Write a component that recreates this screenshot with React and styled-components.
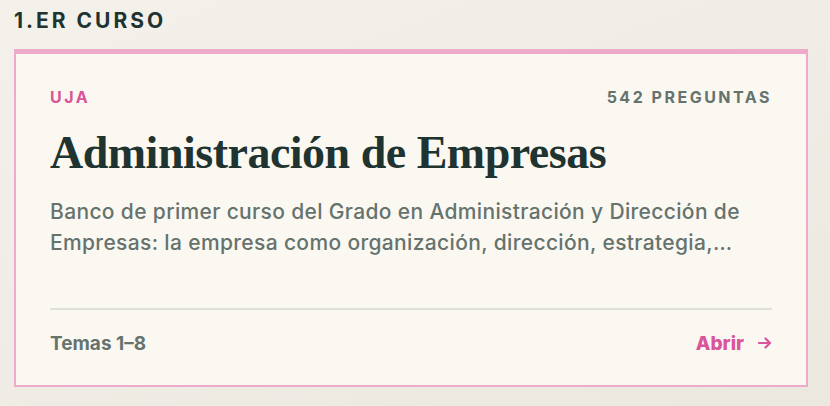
import React from "react";
import styled, { createGlobalStyle } from "styled-components";

const GlobalStyle = createGlobalStyle`
  html, body {
    margin: 0;
    padding: 0;
  }
  body {
    width: 830px;
    height: 406px;
    overflow: hidden;
    background: linear-gradient(160deg, #f3f1ea 0%, #ebe8e0 100%);
    font-family: Inter, "Noto Sans", sans-serif;
  }
`;

const Section = styled.section`
  padding: 9px 22px 0 14px;
`;

const SectionTitle = styled.h2`
  margin: 0 0 16px;
  font-size: 21px;
  line-height: 24px;
  font-weight: 700;
  letter-spacing: 3px;
  color: #1f3330;
`;

const Card = styled.article`
  background: #fbf8f2;
  border: 2px solid #eeaacb;
  border-top-width: 5px;
  padding: 33px 34px 30px;
  display: flex;
  flex-direction: column;
`;

const MetaRow = styled.div`
  display: flex;
  justify-content: space-between;
  align-items: center;
  height: 20px;
`;

const Meta = styled.span`
  font-size: 16px;
  line-height: 20px;
  font-weight: 700;
  letter-spacing: 2.5px;
  text-transform: uppercase;
  color: ${(p) => (p.$accent ? "#d9549a" : "#66736d")};
`;

const Title = styled.h3`
  margin: 19px 0 16px;
  font-family: "Liberation Serif", "DejaVu Serif", serif;
  font-size: 46px;
  line-height: 54px;
  font-weight: 700;
  letter-spacing: -0.5px;
  color: #1f3330;
`;

const Description = styled.p`
  margin: 0;
  font-size: 21px;
  line-height: 31px;
  font-weight: 500;
  letter-spacing: 0.35px;
  color: #66736d;
`;

const Divider = styled.hr`
  margin: 50px 0 21px;
  border: 0;
  border-top: 2px solid #e2e0da;
`;

const Footer = styled.div`
  display: flex;
  justify-content: space-between;
  align-items: center;
  height: 24px;
`;

const Topics = styled.span`
  font-size: 19px;
  font-weight: 700;
  color: #66736d;
`;

const OpenLink = styled.a`
  display: flex;
  align-items: center;
  gap: 14px;
  font-size: 19px;
  font-weight: 800;
  color: #d9549a;
  text-decoration: none;
  cursor: pointer;
`;

const Arrow = () => (
  <svg width="14" height="14" viewBox="0 0 14 14" fill="none">
    <path d="M1 7h11M7.5 2.5L12 7l-4.5 4.5" stroke="#d9549a" strokeWidth="2.2" strokeLinecap="round" strokeLinejoin="round" />
  </svg>
);

export default function App() {
  return (
    <>
      <GlobalStyle />
      <Section>
        <SectionTitle>1.ER CURSO</SectionTitle>
        <Card>
          <MetaRow>
            <Meta $accent>UJA</Meta>
            <Meta>542 preguntas</Meta>
          </MetaRow>
          <Title>Administración de Empresas</Title>
          <Description>
            Banco de primer curso del Grado en Administración y Dirección de
            Empresas: la empresa como organización, dirección, estrategia,…
          </Description>
          <Divider />
          <Footer>
            <Topics>Temas 1–8</Topics>
            <OpenLink>
              Abrir <Arrow />
            </OpenLink>
          </Footer>
        </Card>
      </Section>
    </>
  );
}
